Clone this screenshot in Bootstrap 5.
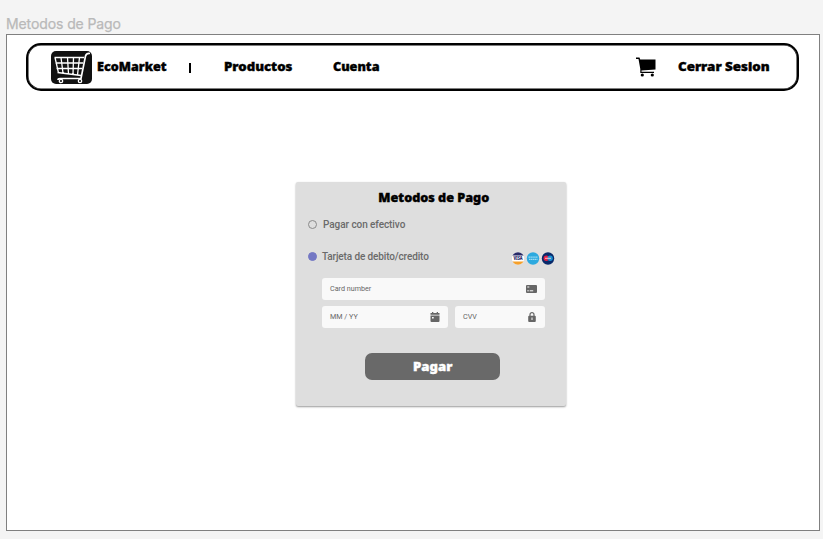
<!DOCTYPE html>
<html lang="es">
<head>
<meta charset="utf-8">
<meta name="viewport" content="width=device-width, initial-scale=1">
<title>Metodos de Pago</title>
<link href="https://cdn.jsdelivr.net/npm/bootstrap@5.3.0/dist/css/bootstrap.min.css" rel="stylesheet">
<style>
body{background:#f4f4f4;font-family:Roboto,sans-serif;height:539px;overflow:hidden;padding:14px 3px 0 6px}
.frame-label{font:14px/20px Inter,sans-serif;color:#b9b9b9;height:20px;letter-spacing:-.1px;white-space:nowrap;-webkit-text-stroke:.25px #b9b9b9}
.screen{height:497px;background:#fff;border:1px solid #808080;padding:8px 20px 0 19px}
.topbar{height:48px;border:2px solid #000;box-shadow:inset 0 0 0 .5px #000;border-radius:15px;padding:0 27px 0 23px}
.display-type{font-family:"Noto Sans","Open Sans",sans-serif;font-weight:900;color:#000;-webkit-text-stroke:.4px currentColor;font-size:12px;line-height:20px;text-decoration:none;white-space:nowrap}
.display-type span{display:inline-block;transform-origin:left center}
.divider{width:2px;height:10px;background:#000;margin-left:22px;margin-top:1px}
.brand{width:70px;margin-left:5px}
.brand span{transform:scaleX(1.05)}
.productos{width:69px;margin-left:33px}
.productos span{transform:scaleX(1.1)}
.cuenta{width:47px;margin-left:40px}
.cuenta span{transform:scaleX(1.05)}
.salir{width:92px;margin-left:22px}
.salir span{transform:scaleX(1.11)}
.pay-card{width:270px;height:224px;margin:91px 0 0 270px;background:#dedede;border:0;border-radius:2px;box-shadow:0 1px 2px rgba(0,0,0,.4);padding:6px 11px 0 12px}
.pay-title{height:20px;margin:0 0 0 4px}
.pay-title span{transform-origin:center;transform:scaleX(1.05)}
.option{color:#6a6a6a;font-size:10px;font-weight:500;letter-spacing:-.07px;height:20px;margin-top:6px}
.option + .option{margin-top:12px;letter-spacing:-.13px}
.radio-dot{width:9px;height:9px;border:1px solid #8a8a8a;border-radius:50%;margin-right:6px}
.radio-dot.on{background:#7478c4;border-color:#7478c4;margin-right:5px}
.field{height:22px;background:#f9f9f9;border-radius:3px;padding:0 8px;color:#666;font-size:7.2px;line-height:22px}
.fields{margin:12px 10px 0 14px;gap:6px}
.expiry{width:126px}
.cvv{width:90px}
.pay-btn{width:135px;height:27px;margin:25px 0 0 57px;background:#696969;border:0;border-radius:7px;color:#fff;font-size:12.5px;line-height:27px;padding:0}
.pay-btn span{transform-origin:center;transform:scaleX(1.05)}
svg{display:block;flex:none}
svg text{font-family:"Noto Sans",sans-serif;font-weight:900}
</style>
</head>
<body>
<div class="frame-label">Metodos de Pago</div>
<main class="screen">
<nav class="topbar d-flex align-items-center">
 <svg width="41" height="33" viewBox="0 0 41 33"><rect width="41" height="33" rx="5" fill="#111"/><g fill="none" stroke="#fff"><path d="M3.5 6.5H33M4.5 12H32M5.500 17.500H31M6.500 21.500L30 24.500M4 6.500L7.500 22M10 6.500L12 22M16.500 6.500L17.500 23M22.500 6.500L22 23.500M28.500 6.500L26.500 24" stroke-width="1.3"/><path d="M39 2.500Q35.500 2 34.500 5L30 27.500H9Q7 27.500 7 29" stroke-width="1.7"/><circle cx="10" cy="30" r="1.7" stroke-width="1.3"/><circle cx="29" cy="30" r="1.7" stroke-width="1.3"/></g></svg>
 <a class="display-type brand" href="#"><span>EcoMarket</span></a>
 <span class="divider"></span>
 <a class="display-type productos" href="#"><span>Productos</span></a>
 <a class="display-type cuenta" href="#"><span>Cuenta</span></a>
 <svg class="ms-auto" width="20" height="20" viewBox="0 0 20 20"><path d="M0 .5H3.500L4.200 2.500H19.500V12.500L5.500 13.500V14.700H18V16H4.300V12L2.500 2H0Z"/><circle cx="6.300" cy="18" r="1.600"/><circle cx="16.300" cy="18" r="1.600"/></svg>
 <a class="display-type salir" href="#"><span>Cerrar Sesion</span></a>
</nav>
<section class="card pay-card">
 <h1 class="display-type pay-title text-center"><span>Metodos de Pago</span></h1>
 <div class="option d-flex align-items-center"><span class="radio-dot"></span><span>Pagar con efectivo</span></div>
 <div class="option d-flex align-items-center"><span class="radio-dot on"></span><span>Tarjeta de debito/credito</span>
  <svg class="ms-auto mt-1" width="43" height="13" viewBox="0 0 43 13"><defs><clipPath id="visa"><circle cx="6" cy="6.500" r="6.200"/></clipPath></defs><g clip-path="url(#visa)"><path fill="#fff" d="M0 0h13v13H0z"/><path fill="#292b68" d="M0 0h13v3.500H0z"/><path fill="#f5a02b" d="M0 9.500h13V13H0z"/></g><text x="1.500" y="8.300" font-size="4.500" textLength="9" lengthAdjust="spacingAndGlyphs" fill="#292b68">VISA</text><circle cx="21" cy="6.500" r="6.200" fill="#2ca9df"/><path d="M16.500 5.200h9M17 7.300h8.500" stroke="#9bdcf4" stroke-width="1.200" stroke-dasharray="1.500 .4"/><circle cx="36" cy="6.500" r="6.200" fill="#08296a"/><circle cx="34.300" cy="6.300" r="2.700" fill="#e51f45"/><circle cx="38.100" cy="6.300" r="2.700" fill="#1a91d2"/><path d="M33 6.300h6" stroke="#f5bac7"/></svg>
 </div>
 <div class="fields d-flex flex-column">
  <div class="field d-flex align-items-center justify-content-between"><span>Card number</span><svg width="11" height="8" viewBox="0 0 11 8"><rect width="11" height="8" rx="1" fill="#666"/><path d="M1.300 2h2M1.300 5.800h1.500M3.700 5.800h3.500" stroke="#f9f9f9"/></svg></div>
  <div class="d-flex justify-content-between">
   <div class="field expiry d-flex align-items-center justify-content-between"><span>MM / YY</span><svg width="10" height="10" viewBox="0 0 10 10"><path fill="#666" d="M.5 1H2V0h1.300v1h3.400V0H8v1h1.500v1.800h-9zM.5 3.500h9V9q0 1-1 1h-7q-1 0-1-1z"/><path fill="#f9f9f9" d="M2 5h1.700v1.500H2z"/></svg></div>
   <div class="field cvv d-flex align-items-center justify-content-between"><span>CVV</span><svg width="10" height="10" viewBox="0 0 10 10"><path d="M3 4V2.700a2 2 0 0 1 4 0V4" fill="none" stroke="#666" stroke-width="1.200"/><rect x="1.200" y="3.700" width="7.600" height="6.300" rx="1" fill="#666"/><path d="M5 5.500v2.500" stroke="#f9f9f9"/></svg></div>
  </div>
 </div>
 <button class="btn pay-btn display-type" type="button"><span>Pagar</span></button>
</section>
</main>
<script src="https://cdn.jsdelivr.net/npm/bootstrap@5.3.0/dist/js/bootstrap.bundle.min.js"></script>
</body>
</html>
